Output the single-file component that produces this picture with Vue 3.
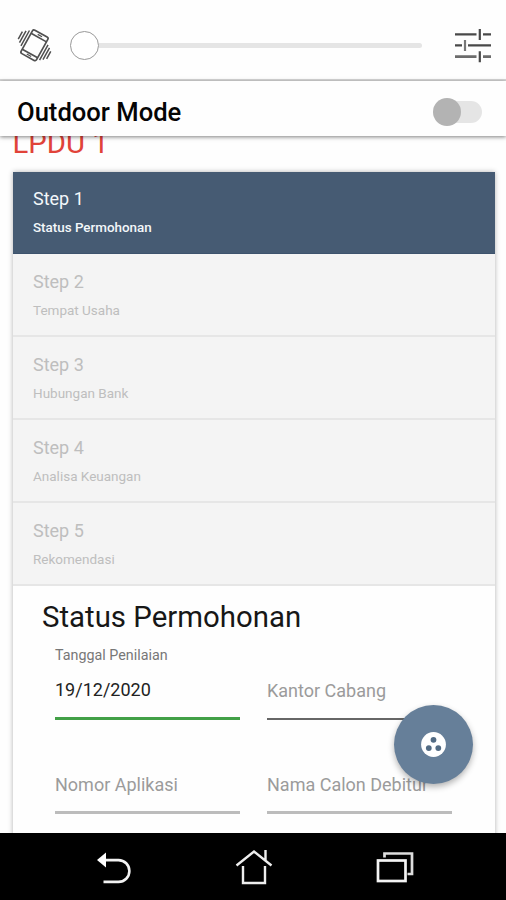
<script setup>
const steps = [
  { title: 'Step 1', label: 'Status Permohonan' },
  { title: 'Step 2', label: 'Tempat Usaha' },
  { title: 'Step 3', label: 'Hubungan Bank' },
  { title: 'Step 4', label: 'Analisa Keuangan' },
  { title: 'Step 5', label: 'Rekomendasi' },
]
const fields = [
  { label: 'Tanggal Penilaian', value: '19/12/2020', state: 'filled' },
  { label: '', value: 'Kantor Cabang', state: 'dark' },
  { label: '', value: 'Nomor Aplikasi', state: 'idle' },
  { label: '', value: 'Nama Calon Debitur', state: 'idle' },
]
</script>

<template>
  <div class="screen">
    <header class="brightness">
      <svg class="vibrate" width="40" height="36" viewBox="0 0 40 36" fill="none" stroke="#505050" stroke-width="1.7" stroke-linejoin="round">
        <g transform="translate(20.5 18.3) rotate(29)">
          <rect x="-8.8" y="-13.4" width="17.6" height="26.8" rx="1.8" />
          <path d="M-8.8-8.8H8.8M-8.8 9.4H8.8" />
          <path d="M-2.5-11.1H2.5M-2.5 11.4H2.5" stroke-width="1.2" />
          <path d="M-11.6-10.5V7M-14.4-8.5V5M-17.2-6V2.5M11.6-7V10.5M14.4-5V8.5M17.2-2.5V6" stroke-width="1.5" />
        </g>
      </svg>
      <div class="slider"><span class="thumb"></span><span class="track"></span></div>
      <svg class="tune" width="38" height="36" viewBox="0 0 38 36" fill="none">
        <g stroke="#494949" stroke-width="2.2">
          <path d="M1 7.3H22.5M29 7.3H37M1 18.3H8M14 18.3H37" />
          <path d="M1 29.6H22.5M29 29.6H37" stroke="#6c6c6c" stroke-width="2.8" />
          <path d="M25.8 2V13M25.8 24.2V35.2" />
          <path d="M11 13V24" stroke="#777" />
        </g>
      </svg>
    </header>
    <section class="mode">
      <span class="mode-title">Outdoor Mode</span>
      <span class="switch"><span class="knob"></span></span>
    </section>
    <main class="content">
      <h1>LPDU 1</h1>
      <div class="card">
        <div v-for="(s, i) in steps" :key="s.title" class="step" :class="{ active: i === 0 }">
          <span class="step-title">{{ s.title }}</span>
          <span class="step-label">{{ s.label }}</span>
        </div>
        <h2>Status Permohonan</h2>
        <div class="fields">
          <div v-for="f in fields" :key="f.value" class="field" :class="f.state">
            <span class="field-label">{{ f.label }}</span>
            <span class="field-value">{{ f.value }}</span>
            <span class="line"></span>
          </div>
        </div>
      </div>
      <button class="fab" aria-label="Menu">
        <svg width="26" height="26" viewBox="0 0 26 26">
          <circle cx="12.5" cy="12.5" r="12.4" fill="#fff" />
          <g fill="#526b84"><circle cx="12.5" cy="7.8" r="2.9" /><circle cx="7.8" cy="16.1" r="2.9" /><circle cx="17.3" cy="16.1" r="2.9" /></g>
        </svg>
      </button>
    </main>
    <nav class="navbar">
      <svg width="36" height="34" viewBox="0 0 36 34">
        <path d="M9 10.1H22.5A10.9 10.9 0 0 1 22.5 31.9H7.5" fill="none" stroke="#f2f2f2" stroke-width="2.6" />
        <path d="M1 10L10 2.5V17.5Z" fill="#fff" />
      </svg>
      <svg width="38" height="36" viewBox="0 0 38 36" fill="none" stroke="#eee" stroke-width="2.4">
        <path d="M1.5 16.5L19 2.5L36.5 16.5M30.5 1V11.5M8 17V34H30V17" />
      </svg>
      <svg width="38" height="34" viewBox="0 0 38 34" fill="none" stroke="#f4f4f4" stroke-width="2.7">
        <rect x="2" y="10.5" width="27.5" height="20.5" />
        <path d="M8.5 7.5V3.5H36V24H31.5" stroke="#ddd" />
      </svg>
    </nav>
  </div>
</template>

<style>
body { margin: 0; overflow: hidden; }
</style>

<style scoped>
.screen { width: 506px; height: 900px; display: flex; flex-direction: column; overflow: hidden; background: #fefefe; font-family: Roboto, sans-serif; }
.brightness { box-sizing: border-box; height: 81px; flex: none; display: flex; align-items: center; padding: 11px 14px 0 14px; border-bottom: 2px solid #d8d8d8; background: #fefefe; }
.vibrate { flex: none; overflow: visible; }
.slider { display: flex; align-items: center; width: 352px; margin-left: 16px; height: 30px; }
.thumb { box-sizing: border-box; width: 29px; height: 29px; border: 1.5px solid #999; border-radius: 50%; flex: none; background: #fff; }
.track { height: 5px; flex: 1; border-radius: 0 3px 3px 0; background: #e5e5e5; }
.tune { margin-left: auto; }
.mode { height: 55px; flex: none; display: flex; align-items: center; justify-content: space-between; padding: 0 24px 0 17px; background: #fefefe; position: relative; z-index: 2; box-shadow: 0 1px 4px rgba(0, 0, 0, .5); }
.mode-title { font-size: 25.6px; font-weight: 500; line-height: 30px; color: #050505; padding-top: 7px; white-space: nowrap; }
.switch { display: flex; align-items: center; width: 49px; height: 22px; margin-top: 6px; border-radius: 11px; background: linear-gradient(90deg, transparent 14px, #e5e5e5 14px); }
.knob { width: 28px; height: 28px; border-radius: 50%; background: #b3b3b3; flex: none; }
.content { flex: 1; min-height: 0; overflow: hidden; position: relative; padding: 0 11px 0 12.5px; }
h1 { margin: -10px 0 0; height: 46px; font-size: 29.3px; line-height: 34px; font-weight: 400; color: #e14339; white-space: nowrap; }
.card { height: 680px; background: #fefefe; box-shadow: 0 0 5px rgba(0, 0, 0, .3); }
.step { box-sizing: border-box; height: 83px; border-bottom: 2px solid #e6e6e6; background: #f4f4f4; color: #bebebe; padding: 16px 20.5px 0; display: flex; flex-direction: column; }
.step.active { height: 82px; background: #465b73; color: #f3f7fa; border-bottom-color: #3d536d; border-bottom-width: 1px; }
.step-title { font-size: 18px; line-height: 24px; }
.step-label { font-size: 13.5px; line-height: 20px; margin-top: 6px; }
.step.active .step-title { margin-top: -1px; }
.step.active .step-label { font-size: 13.4px; font-weight: 500; margin-top: 7px; }
.step-title, .step-label, .field-label, .field-value { white-space: nowrap; }
h2 { margin: 13px 0 0 29.5px; font-size: 29.4px; line-height: 36px; font-weight: 400; color: #171717; white-space: nowrap; }
.fields { display: grid; grid-template-columns: 185px 185px; column-gap: 27px; row-gap: 20px; padding: 11px 0 0 42.5px; }
.field { display: flex; flex-direction: column; height: 74px; color: #9b9b9b; }
.field > * { flex: none; }
.field-label { height: 18px; font-size: 14.3px; line-height: 18px; color: #777; }
.field-value { font-size: 18px; line-height: 24px; margin-top: 15px; }
.line { height: 3px; margin-top: 14px; background: #bcbcbc; }
.filled .field-value { color: #222; margin-top: 14px; }
.filled .line { background: #42a047; margin-top: 15px; }
.dark .line { height: 1.5px; background: #666; margin-top: 15px; }
.fab { position: absolute; left: 394px; top: 569px; width: 79px; height: 79px; padding: 0; border: 0; border-radius: 50%; background: #667f99; display: flex; align-items: center; justify-content: center; box-shadow: 0 3px 6px rgba(0, 0, 0, .3); }
.navbar { height: 67px; flex: none; background: #000; display: grid; grid-template-columns: 36px 38px 38px; justify-content: center; align-items: center; column-gap: 103px; padding-left: 3px; }
</style>
